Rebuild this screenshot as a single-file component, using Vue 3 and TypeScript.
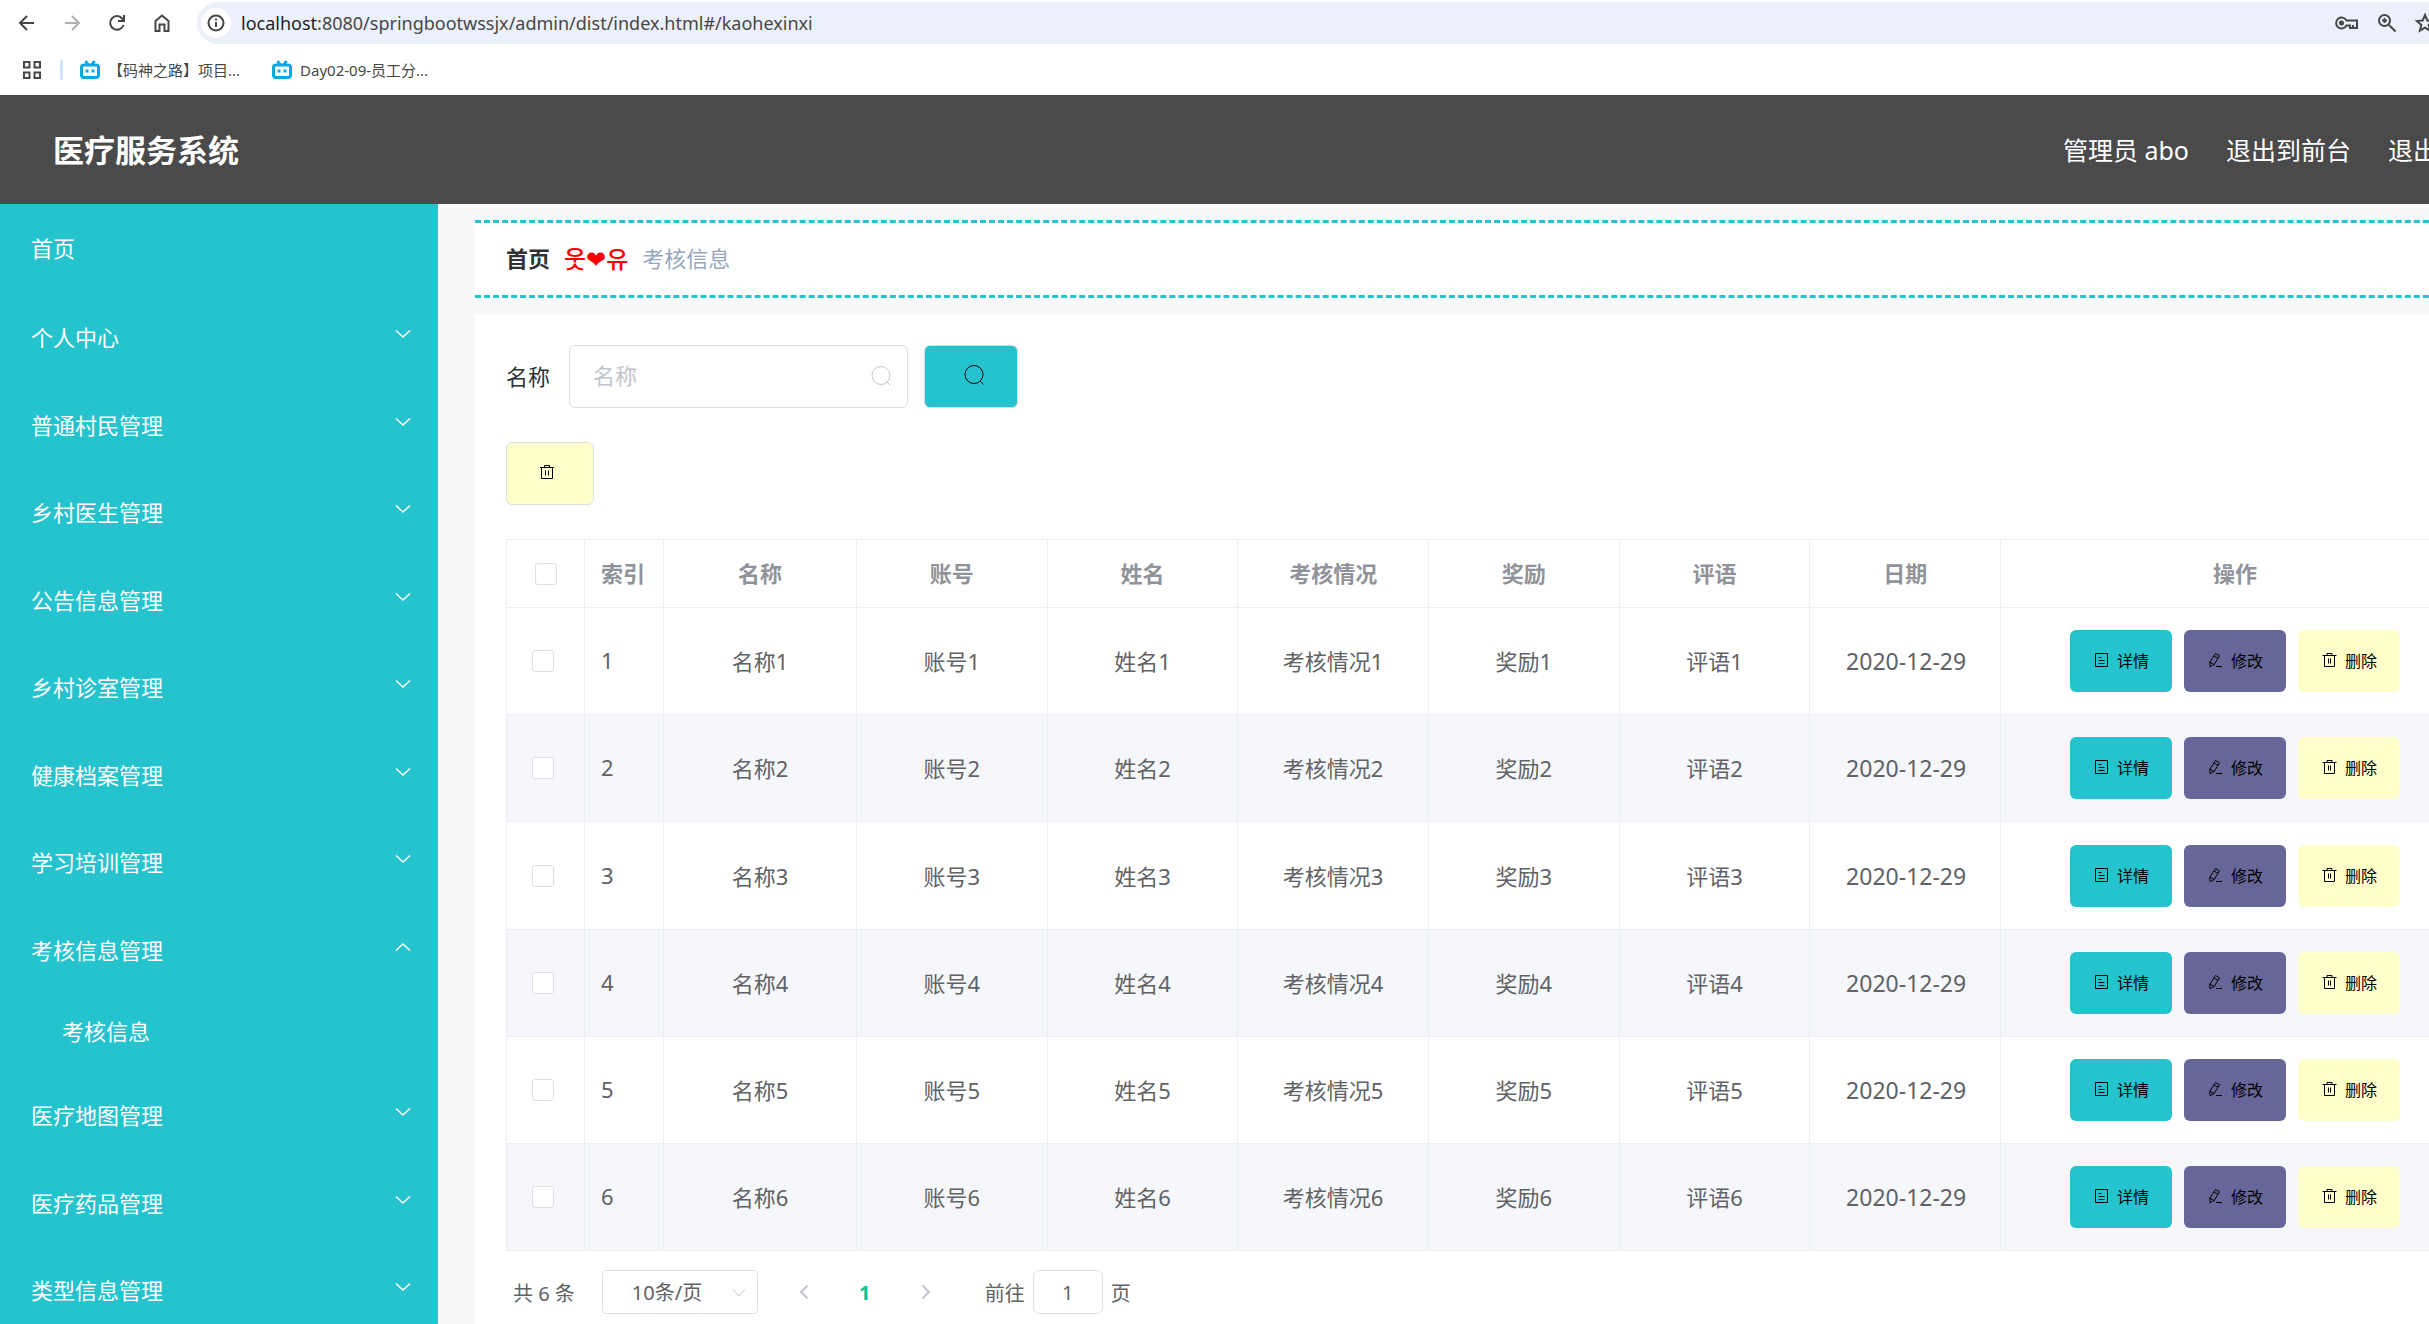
<script setup lang="ts">
import { ref } from 'vue'

interface MenuGroup {
  title: string
  children?: string[]
}

const menu: MenuGroup[] = [
  { title: '个人中心' },
  { title: '普通村民管理' },
  { title: '乡村医生管理' },
  { title: '公告信息管理' },
  { title: '乡村诊室管理' },
  { title: '健康档案管理' },
  { title: '学习培训管理' },
  { title: '考核信息管理', children: ['考核信息'] },
  { title: '医疗地图管理' },
  { title: '医疗药品管理' },
  { title: '类型信息管理' },
]

const fields = ['名称', '账号', '姓名', '考核情况', '奖励', '评语']
const rows = [1, 2, 3, 4, 5, 6]
const bookmarks = ['【码神之路】项目...', 'Day02-09-员工分...']

const keyword = ref('')
const pageSize = ref('10')
const jumpTo = ref('1')
</script>

<template>
  <div class="window">
    <div class="page">
      <div class="toolbar">
        <button class="tool" aria-label="后退">
          <svg width="20" height="20" viewBox="0 0 20 20"><path d="M17 10H3M10 3L3 10l7 7" /></svg>
        </button>
        <button class="tool dim" aria-label="前进">
          <svg width="20" height="20" viewBox="0 0 20 20"><path d="M3 10h14M10 3l7 7-7 7" /></svg>
        </button>
        <button class="tool" aria-label="刷新">
          <svg width="20" height="20" viewBox="0 0 20 20"><path d="M16.500 12a6.800 6.800 0 1 1-1.300-6.500L17 7.500M17 2v6h-6" /></svg>
        </button>
        <button class="tool" aria-label="主页">
          <svg width="20" height="20" viewBox="0 0 20 20"><path d="M3.500 8L10 2.500 16.500 8v10h-4v-6.500h-5V18h-4z" /></svg>
        </button>
        <div class="address">
          <span class="info">
            <svg width="20" height="20" viewBox="0 0 20 20"><circle cx="10" cy="10" r="7.500" /><path d="M10 9v5M10 5.500v2" /></svg>
          </span>
          <span class="url"><b>localhost</b>:8080/springbootwssjx/admin/dist/index.html#/kaohexinxi</span>
          <svg class="key" width="24" height="16" viewBox="0 0 24 16"><path d="M11.500 5.500A5.500 5.500 0 1 0 11.500 10.500H15V13h7V5.500z" /><circle class="dot" cx="6.500" cy="8" r="2.500" /><path d="M18 13v-3" /></svg>
          <svg width="20" height="20" viewBox="0 0 20 20"><circle cx="7.500" cy="7.500" r="5.500" /><path d="M12 12l6.500 6.500M7.500 5v5M5 7.500h5" /></svg>
          <svg width="20" height="20" viewBox="0 0 20 20"><path d="M10 2l2.300 5.500 5.900.500-4.500 3.900 1.400 5.800L10 14.600l-5.100 3.100 1.400-5.800L1.800 8l5.900-.500z" /></svg>
        </div>
      </div>
      <div class="bookmarks">
        <svg class="apps" width="20" height="20" viewBox="0 0 20 20"><path d="M2 2h5.500v5.500H2zM12.500 2H18v5.500h-5.500zM2 12.500h5.500V18H2zM12.500 12.500H18V18h-5.500z" /></svg>
        <i class="divider"></i>
        <a v-for="name in bookmarks" :key="name" href="#">
          <svg width="20" height="20" viewBox="0 0 20 20"><path d="M5.500 1L8 4.500M14.500 1L12 4.500" /><rect x="1.500" y="5" width="17" height="12.500" rx="2.500" /><path d="M7 9.500v3M13 9.500v3" /></svg>
          <span>{{ name }}</span>
        </a>
      </div>

      <header class="topbar">
        <h1>医疗服务系统</h1>
        <nav>
          <span>管理员 abo</span>
          <a href="#">退出到前台</a>
          <a href="#">退出</a>
        </nav>
      </header>

      <div class="body">
        <aside class="sidebar">
          <a class="home" href="#">首页</a>
          <div v-for="group in menu" :key="group.title" class="group">
            <button class="entry">
              <span>{{ group.title }}</span>
              <svg width="16" height="10" viewBox="0 0 16 10">
                <path :d="group.children ? 'M1 8.500L8 2l7 6.500' : 'M1 1.500L8 8l7-6.500'" />
              </svg>
            </button>
            <a v-for="child in group.children" :key="child" class="child" href="#">{{ child }}</a>
          </div>
        </aside>

        <main>
          <div class="crumbs">
            <a href="#">首页</a>
            <span class="sep">웃❤유</span>
            <span class="current">考核信息</span>
          </div>

          <section class="panel">
            <form class="search" @submit.prevent>
              <label for="keyword">名称</label>
              <span class="field">
                <input id="keyword" v-model="keyword" type="text" placeholder="名称" />
                <svg width="22" height="22" viewBox="0 0 22 22"><circle cx="11" cy="10.500" r="9" /><path d="M17 17l3.500 3.500" /></svg>
              </span>
              <button class="query" aria-label="查询">
                <svg width="22" height="22" viewBox="0 0 22 22"><circle cx="11" cy="10.500" r="9" /><path d="M17 17l3.500 3.500" /></svg>
              </button>
            </form>

            <button class="remove" aria-label="删除">
              <svg width="16" height="16" viewBox="0 0 16 16"><path d="M1 3.500h14M5.500 3.500v-2h5v2M2.500 3.500v11h11v-11M6.500 6.500v5M9.500 6.500v5" /></svg>
            </button>

            <table>
              <colgroup>
                <col class="c-check" />
                <col class="c-index" />
                <col class="c-name" />
                <col v-for="n in 6" :key="n" />
                <col class="c-ops" />
              </colgroup>
              <thead>
                <tr>
                  <th class="check"><input type="checkbox" aria-label="全选" /></th>
                  <th class="index">索引</th>
                  <th v-for="field in fields" :key="field">{{ field }}</th>
                  <th>日期</th>
                  <th>操作</th>
                </tr>
              </thead>
              <tbody>
                <tr v-for="row in rows" :key="row">
                  <td class="check"><input type="checkbox" :aria-label="'选择' + row" /></td>
                  <td class="index">{{ row }}</td>
                  <td v-for="field in fields" :key="field">{{ field }}{{ row }}</td>
                  <td class="date">2020-12-29</td>
                  <td class="actions">
                    <div class="ops">
                      <button class="detail">
                        <svg width="16" height="16" viewBox="0 0 16 16"><path d="M2.500 1.500h12v13h-12zM5.500 5.500h3M5.500 8.500h6M5.500 11.500h6" /></svg>
                        <span>详情</span>
                      </button>
                      <button class="edit">
                        <svg width="16" height="16" viewBox="0 0 16 16"><path d="M8.500 1.500l4 2.300-5.300 8.700-4.200 2.200-.200-4.500zM7 4l4 2.300M2.800 10.200l4.400 2.300M9 14.500h6" /></svg>
                        <span>修改</span>
                      </button>
                      <button class="delete">
                        <svg width="16" height="16" viewBox="0 0 16 16"><path d="M1.500 3.500h14M6 3.500v-2h5v2M3.500 3.500v11h10v-11M7.500 6.500v5M9.500 6.500v5" /></svg>
                        <span>删除</span>
                      </button>
                    </div>
                  </td>
                </tr>
              </tbody>
            </table>

            <div class="pager">
              <span class="total">共 6 条</span>
              <span class="size">
                <select v-model="pageSize" aria-label="每页条数">
                  <option value="10">10条/页</option>
                </select>
                <svg width="14" height="10" viewBox="0 0 14 10"><path d="M1 1.500L7 8l6-6.500" /></svg>
              </span>
              <button class="step" aria-label="上一页">
                <svg width="12" height="18" viewBox="0 0 12 18"><path d="M9.500 2.500L3 9l6.500 6.500" /></svg>
              </button>
              <button class="num">1</button>
              <button class="step" aria-label="下一页">
                <svg width="12" height="18" viewBox="0 0 12 18"><path d="M2.500 2.500L9 9l-6.500 6.500" /></svg>
              </button>
              <label class="jump">
                <span>前往</span>
                <input v-model="jumpTo" type="text" />
                <span>页</span>
              </label>
            </div>
          </section>
        </main>
      </div>
    </div>
  </div>
</template>

<style>
body {
  background: #fff;
}
</style>

<style scoped>
* {
  box-sizing: border-box;
}
.window {
  height: 100vh;
  overflow: hidden;
  font-family: "Noto Sans", "Noto Sans CJK SC", sans-serif;
  font-size: 22px;
  color: #303133;
}
/* the admin page is wider than the viewport and runs off its right edge */
.page {
  width: calc(100% + 72px);
  min-height: 100%;
  display: flex;
  flex-direction: column;
}
svg {
  display: block;
  flex: none;
  fill: none;
  stroke: currentColor;
}
button {
  padding: 0;
  border: 0;
  background: none;
  font: inherit;
  color: inherit;
  cursor: pointer;
}
a {
  color: inherit;
  text-decoration: none;
}
input,
select {
  font: inherit;
  color: inherit;
  outline: none;
}

.toolbar {
  display: flex;
  align-items: center;
  height: 46px;
  padding-left: 17px;
  color: #474747;
}
.toolbar svg {
  stroke-width: 2;
}
.tool {
  width: 20px;
  margin-right: 25px;
}
.dim {
  color: #b0b0b0;
}
.address {
  flex: 1;
  display: flex;
  align-items: center;
  gap: 18px;
  height: 42px;
  padding: 0 66px 0 4px;
  border-radius: 21px 0 0 21px;
  background: #ecf0fa;
}
.info {
  display: flex;
  align-items: center;
  justify-content: center;
  width: 30px;
  height: 30px;
  border-radius: 50%;
  background: #fff;
}
.url {
  flex: 1;
  margin-left: -8px;
  font-size: 18px;
}
.url b {
  font-weight: 400;
  color: #1f1f1f;
}
.dot {
  fill: currentColor;
  stroke: none;
}

.bookmarks {
  display: flex;
  align-items: center;
  height: 49px;
  padding: 0 0 2px 22px;
  font-size: 15px;
  color: #474747;
}
.apps {
  stroke-width: 2;
}
.divider {
  width: 3px;
  height: 20px;
  margin: 0 17px 0 18px;
  border-radius: 2px;
  background: #d3e3fd;
}
.bookmarks a {
  display: flex;
  align-items: center;
  gap: 8px;
  margin-right: 32px;
}
.bookmarks a svg {
  color: #08a9e0;
  stroke-width: 3;
}

.topbar {
  display: flex;
  align-items: center;
  justify-content: space-between;
  height: 109px;
  padding: 0 63px 2px 53px;
  background: #4a4a4a;
  color: #fff;
}
.topbar h1 {
  margin: 0;
  font-size: 31px;
}
.topbar nav {
  display: flex;
  gap: 37px;
  font-size: 25px;
}

.body {
  flex: 1;
  display: flex;
  background: #f7f8fa;
}
.sidebar {
  flex: none;
  width: 438px;
  background: #25c3ce;
  color: #fff;
}
.home {
  display: flex;
  align-items: center;
  height: 90px;
  padding: 0 0 4px 31px;
}
.entry {
  display: flex;
  align-items: center;
  justify-content: space-between;
  width: 100%;
  height: 88px;
  padding: 0 27px 4px 31px;
}
.group:nth-child(odd) .entry {
  height: 87px;
}
.entry svg {
  margin-bottom: 4px;
  stroke-width: 1.5;
}
.child {
  display: flex;
  align-items: center;
  height: 78px;
  padding: 0 0 6px 62px;
}

main {
  flex: 1;
  min-width: 0;
  padding: 16px 0 0 37px;
}
.crumbs {
  display: flex;
  align-items: center;
  gap: 14px;
  height: 78px;
  padding: 0 0 4px 31px;
  border-top: 3px dashed #25c3ce;
  border-bottom: 3px dashed #25c3ce;
  background: #fff;
}
.crumbs a {
  font-weight: 700;
}
.sep {
  font-family: "Noto Sans CJK KR", "DejaVu Sans", sans-serif;
  font-size: 24px;
  font-weight: 500;
  color: #f00;
}
.current {
  color: #97a8be;
}

.panel {
  margin-top: 16px;
  padding: 31px 31px 40px;
  background: #fff;
}
.search {
  display: flex;
  align-items: center;
}
.search label {
  padding-bottom: 4px;
}
.field {
  position: relative;
  width: 339px;
  margin: 0 16px 0 19px;
}
.field input {
  display: block;
  width: 100%;
  height: 63px;
  padding: 0 50px 4px 23px;
  border: 1px solid #dcdfe6;
  border-radius: 6px;
}
.field input::placeholder {
  color: #c0c4cc;
}
.field svg {
  position: absolute;
  top: 20px;
  right: 16px;
  color: #c0c4cc;
}
.query,
.remove {
  display: flex;
  align-items: center;
  height: 63px;
  border: 1px solid #dcdfe6;
  border-radius: 6px;
  color: #000;
}
.query {
  width: 94px;
  padding: 0 0 4px 38px;
  background: #25c3ce;
}
.remove {
  width: 88px;
  margin: 34px 0;
  padding: 0 0 4px 32px;
  background: #ffc;
}

table {
  width: 100%;
  table-layout: fixed;
  border-collapse: collapse;
  color: #606266;
}
.c-check {
  width: 78px;
}
.c-index {
  width: 79px;
}
.c-name {
  width: 193px;
}
.c-ops {
  width: 469px;
}
th,
td {
  padding: 0;
  border: 1px solid #ebeef5;
  text-align: center;
}
th {
  height: 68px;
  padding-bottom: 4px;
  color: #909399;
}
td {
  height: 107px;
  padding-bottom: 2px;
}
tbody tr:nth-child(3) td {
  height: 108px;
}
tbody tr:nth-child(even) {
  background: #f5f7fa;
}
.index {
  padding-left: 16px;
  text-align: left;
}
td.check {
  padding: 0 0 0 25px;
}
th.check {
  padding: 0 0 0 28px;
}
.check input {
  appearance: none;
  display: block;
  width: 22px;
  height: 22px;
  margin: 0;
  border: 1px solid #dcdfe6;
  border-radius: 3px;
  background: #fff;
}
td.date {
  padding: 0 0 0 2px;
  font-size: 23px;
}
td.actions {
  padding: 0;
}
.ops {
  display: flex;
  justify-content: center;
  gap: 12px;
}
.ops button {
  display: flex;
  align-items: center;
  justify-content: center;
  gap: 8px;
  width: 102px;
  height: 62px;
  padding-bottom: 2px;
  border-radius: 6px;
  font-size: 16px;
  color: #000;
}
.detail {
  background: #25c3ce;
}
.edit {
  background: #669;
}
.delete {
  background: #ffc;
}

.pager {
  display: flex;
  align-items: center;
  margin-top: 19px;
  padding-left: 7px;
  font-size: 20px;
  color: #606266;
}
.size {
  position: relative;
  margin: 0 29px 0 27px;
}
.size select {
  appearance: none;
  display: block;
  width: 156px;
  height: 44px;
  padding: 0 0 0 29px;
  border: 1px solid #dcdfe6;
  border-radius: 4px;
  background: #fff;
}
.size svg {
  position: absolute;
  top: 18px;
  right: 12px;
  color: #c0c4cc;
}
.step {
  display: flex;
  justify-content: center;
  width: 34px;
  color: #c0c4cc;
}
.step svg {
  stroke-width: 2;
}
.num {
  width: 88px;
  font-weight: 700;
  color: #00c292;
}
.jump {
  display: flex;
  align-items: center;
  gap: 8px;
  margin-left: 42px;
}
.jump input {
  width: 70px;
  height: 44px;
  padding: 0;
  border: 1px solid #dcdfe6;
  border-radius: 6px;
  text-align: center;
}
</style>
